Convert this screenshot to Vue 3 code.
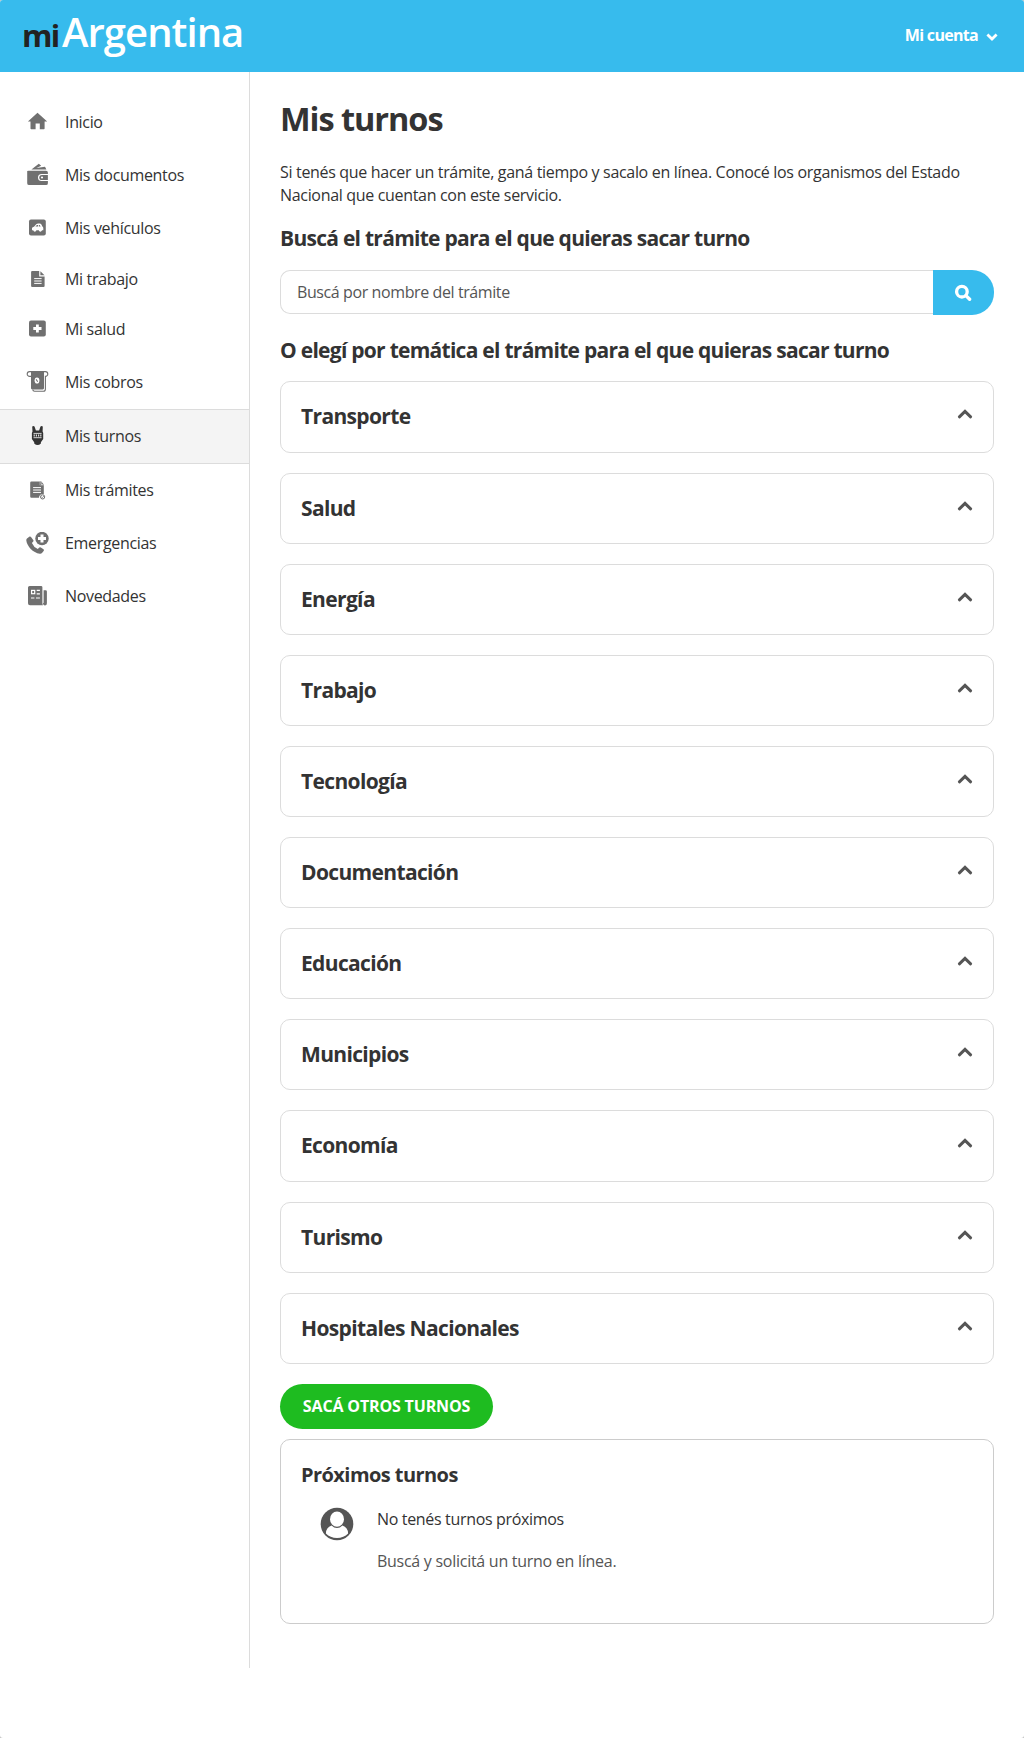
<script setup>
const menu = [
  { id: 'inicio', label: 'Inicio', h: 52 },
  { id: 'documentos', label: 'Mis documentos', h: 53, low: true },
  { id: 'vehiculos', label: 'Mis vehículos', h: 53, low: true },
  { id: 'trabajo', label: 'Mi trabajo', h: 50 },
  { id: 'salud', label: 'Mi salud', h: 51 },
  { id: 'cobros', label: 'Mis cobros', h: 54 },
  { id: 'turnos', label: 'Mis turnos', h: 55, active: true },
  { id: 'tramites', label: 'Mis trámites', h: 53 },
  { id: 'emergencias', label: 'Emergencias', h: 53 },
  { id: 'novedades', label: 'Novedades', h: 53 }
]

const topics = [
  'Transporte',
  'Salud',
  'Energía',
  'Trabajo',
  'Tecnología',
  'Documentación',
  'Educación',
  'Municipios',
  'Economía',
  'Turismo',
  'Hospitales Nacionales'
]
</script>

<template>
  <div class="page">
    <header class="topbar">
      <a class="logo"><span class="logo-mi">mi</span><span class="logo-ar">Argentina</span></a>
      <button class="account" type="button">
        <span>Mi cuenta</span>
        <svg width="12" height="8" viewBox="0 0 12 8"><path d="M1.4 1.6 6 6 10.6 1.6" fill="none" stroke="#fff" stroke-width="2.8" /></svg>
      </button>
    </header>

    <div class="body">
      <nav class="sidebar">
        <a
          v-for="item in menu"
          :key="item.id"
          class="item"
          :class="{ active: item.active, low: item.low }"
          :style="{ height: item.h + 'px' }"
        >
          <svg class="icon" viewBox="0 0 24 24" width="24" height="24" fill="currentColor">
            <template v-if="item.id === 'inicio'">
              <path d="M12.5 2.7 22.2 11.6H19.6V18.6Q19.6 19.3 18.9 19.3H14.8V13.4H10.6V19.3H6.2Q5.5 19.3 5.5 18.6V11.6H2.9Z" />
            </template>
            <template v-else-if="item.id === 'documentos'">
              <path d="M3.6 7.7H21Q22.9 7.7 22.9 9.5V10.9H16.6A3.5 3.5 0 0 0 16.6 18.1H22.9V20.2Q22.9 22.1 21 22.1H4.2Q2.2 22.1 2.2 20.2V8.1Q2.8 7.7 3.6 7.7Z" />
              <path d="M16.9 11.9H22.9V17.1H16.9A2.6 2.6 0 0 1 16.9 11.9Z" />
              <circle cx="17" cy="14.5" r="1.1" fill="#fff" />
              <path d="M6.4 6.5 13.8 .7 16.2 2.8 11.4 4.9 20 3.7 21.4 6.5Z" />
            </template>
            <template v-else-if="item.id === 'vehiculos'">
              <rect x="4" y="3.4" width="16.8" height="16" rx="2" />
              <path d="M7 14.2V12.2Q7.2 11 9 10.8L11.2 8.3Q12 7.5 13.3 7.5H14.6Q15.8 7.5 16.4 8.4L17.4 10.4Q18.3 10.9 18.3 12V14.2H16.9A1.6 1.6 0 0 1 13.8 14.2H11.4A1.6 1.6 0 0 1 8.3 14.2Z" fill="#fff" />
              <path d="M10.4 10.4 12 8.9H13V10.4ZM13.8 8.9H14.7L15.6 10.4H13.8Z" />
              <circle cx="9.8" cy="14.3" r="1.1" fill="#fff" />
              <circle cx="15.4" cy="14.3" r="1.1" fill="#fff" />
            </template>
            <template v-else-if="item.id === 'trabajo'">
              <path d="M7.2 4H14.2V9.4H19.6V18.9Q19.6 20 18.5 20H7.2Q6.1 20 6.1 18.9V5.1Q6.1 4 7.2 4Z" />
              <path d="M15.4 4.2 19.5 8.3H15.4Z" />
              <path d="M9.2 11.6H16.6M9.2 14H16.6M9.2 16.4H16.6" stroke="#fff" stroke-width="1" />
            </template>
            <template v-else-if="item.id === 'salud'">
              <rect x="4" y="2.4" width="16.8" height="16.2" rx="2" />
              <path d="M11 6.4H13.8V9.1H16.5V11.9H13.8V14.6H11V11.9H8.3V9.1H11Z" fill="#fff" />
            </template>
            <template v-else-if="item.id === 'cobros'">
              <path d="M6 2H19V18.3Q19 19.4 17.8 19.4H7.2Q6 19.4 6 18.3Z" />
              <path d="M6 6.4H4.6A2.1 2.1 0 0 1 4.6 1.6H20.4A2.1 2.1 0 0 1 20.4 6.4V19.2Q20.4 21.2 18.4 21.2H9.5Q8 21.2 7.7 19.6" fill="none" stroke="currentColor" stroke-width="1.1" />
              <ellipse cx="12" cy="10.5" rx="2.4" ry="3.1" fill="#fff" />
              <path d="M11.1 9.4 12.7 11.7" stroke="currentColor" stroke-width="1.1" />
            </template>
            <template v-else-if="item.id === 'turnos'">
              <path d="M7.2 1.5Q8.5 .7 9.5 1.5L10.9 5.6H14.1L15.5 1.5Q16.5 .7 17.8 1.5L17.6 6.4 18.2 8V13.9L15.9 17.2V18.5Q12.6 21.5 9.2 18.5V17.2L6.9 13.9V8L7.5 6.4Z" />
              <path d="M8.5 8.4H16.6M8.5 12.7H16.6" stroke="#fff" stroke-width=".8" />
              <path d="M8.6 10.5H16.6" stroke="#ddd" stroke-width="2" stroke-dasharray="1.2 1" />
            </template>
            <template v-else-if="item.id === 'tramites'">
              <path d="M6.4 2.6H14.7V6.3H18.8V15.2A3.6 3.6 0 0 0 14 18.8H6.4Q5.2 18.8 5.2 17.6V3.8Q5.2 2.6 6.4 2.6Z" />
              <path d="M14.7 2.6H16.3L18.8 5.4V6.3H14.7Z" />
              <path d="M16 3V5.6H18.6" fill="none" stroke="#fff" stroke-width=".6" />
              <path d="M8.1 8.6H16M8.1 11H16M8.1 13.4H16" stroke="#fff" stroke-width="1" />
              <circle cx="17.6" cy="17.9" r="2.1" fill="#fff" stroke="currentColor" stroke-width="1" />
              <path d="M16.5 17.9 17.4 18.7 18.8 17.1" fill="none" stroke="currentColor" stroke-width=".8" />
            </template>
            <template v-else-if="item.id === 'emergencias'">
              <path d="M2 6.6 4.6 4.6Q5.4 4.2 6 5L8.4 8.2Q8.8 9 8.2 9.6L6.9 10.9Q8.6 15 12.8 17L14.3 15.6Q15 15.1 15.8 15.6L18.5 17.3Q19.3 18 18.8 18.8L17 21.1Q16.2 22 14.8 21.8C8 20.6 2 14.2 1.3 8.4Q1.2 7.3 2 6.6Z" />
              <circle cx="17" cy="6.5" r="6.7" />
              <path d="M15.5 2.5H18.5V5H21V8H18.5V10.5H15.5V8H13V5H15.5Z" fill="#fff" />
            </template>
            <template v-else>
              <path d="M4.6 .9H16Q17.4 .9 17.4 2.3V18.3Q17.4 19.3 18 20.3H5Q3 20.3 3 18.3V2.5Q3 .9 4.6 .9Z" />
              <path d="M18.6 5.3H20.6Q21.9 5.3 21.9 6.6V18.2A2 2 0 0 1 17.9 18.6L18.6 17.8Z" />
              <rect x="6.6" y="5.4" width="3.1" height="3.3" fill="none" stroke="#fff" stroke-width="1.2" />
              <path d="M11.7 5.4H14.9M11.7 8.8H14.9M6 13H9.4M11 13H14.9" stroke="#fff" stroke-width="1.2" />
            </template>
          </svg>
          <span class="label">{{ item.label }}</span>
        </a>
      </nav>

      <main class="content">
        <h1>Mis turnos</h1>
        <p class="intro">Si tenés que hacer un trámite, ganá tiempo y sacalo en línea. Conocé los organismos del Estado<br />Nacional que cuentan con este servicio.</p>

        <h2 class="h-search">Buscá el trámite para el que quieras sacar turno</h2>
        <div class="search">
          <div class="field">Buscá por nombre del trámite</div>
          <button class="go" type="button" aria-label="Buscar">
            <svg width="18" height="18" viewBox="0 0 18 18" fill="none" stroke="#fff">
              <circle cx="7.9" cy="7.7" r="5.3" stroke-width="3.3" />
              <path d="M11.9 11.6 15.6 15.2" stroke-width="3.4" stroke-linecap="round" />
            </svg>
          </button>
        </div>

        <h2 class="h-topics">O elegí por temática el trámite para el que quieras sacar turno</h2>
        <div class="topics">
          <section v-for="topic in topics" :key="topic" class="topic">
            <h3>{{ topic }}</h3>
            <svg class="chev" width="16" height="12" viewBox="0 0 16 12"><path d="M2.4 8.8 8 3.4 13.6 8.8" fill="none" stroke="#555" stroke-width="3" stroke-linecap="round" /></svg>
          </section>
        </div>

        <button class="more" type="button">SACÁ OTROS TURNOS</button>

        <section class="upcoming">
          <h3>Próximos turnos</h3>
          <div class="row">
            <svg class="avatar" width="34" height="34" viewBox="0 0 34 34">
              <circle cx="17" cy="17" r="16.3" fill="#555" />
              <path d="M11.6 18.6Q6 20.4 5.9 26.6Q10.2 31 17 31Q23.8 31 28.1 26.6Q28 20.4 22.4 18.6Q20 21.1 17 21.1Q14 21.1 11.6 18.6Z" fill="#fff" />
              <ellipse cx="17" cy="12.2" rx="7" ry="7.6" fill="#fff" />
            </svg>
            <div class="msg">
              <p class="none">No tenés turnos próximos</p>
              <p class="hint">Buscá y solicitá un turno en línea.</p>
            </div>
          </div>
        </section>
      </main>
    </div>
  </div>
</template>

<style>
html,
body {
  margin: 0;
  background: #c4c4c4;
}
</style>

<style scoped>
.page {
  box-sizing: border-box;
  height: 1738px;
  overflow: hidden;
  border-radius: 3px;
  background: #fff;
  color: #333;
  font-family: "Open Sans", "Noto Sans", sans-serif;
  font-size: 16px;
  line-height: 23px;
}
h1, h2, h3, p { margin: 0; }
button {
  border: 0;
  padding: 0;
  font-family: inherit;
}
.topbar {
  display: flex;
  justify-content: space-between;
  height: 72px;
  background: #37bbed;
}
.logo {
  display: flex;
  align-items: baseline;
  padding: 5px 0 0 22px;
  line-height: 54px;
}
.logo-mi {
  width: 40px;
  color: #222;
  font-size: 31px;
  font-weight: 700;
  letter-spacing: -1.8px;
}
.logo-ar {
  color: #fff;
  font-size: 40px;
  font-weight: 600;
  letter-spacing: -0.95px;
}
.account {
  display: flex;
  align-items: center;
  gap: 8px;
  height: 70px;
  margin-right: 26px;
  background: none;
  color: #fff;
  font-size: 16px;
  font-weight: 700;
  letter-spacing: -0.7px;
}
.account svg { margin-top: 3px; }
.body { display: flex; }
.sidebar {
  box-sizing: border-box;
  flex: none;
  width: 250px;
  height: 1596px;
  padding-top: 24px;
  border-right: 1px solid #dcdcdc;
}
.item {
  box-sizing: border-box;
  display: flex;
  align-items: center;
  gap: 16px;
  padding-left: 25px;
  color: #333;
}
.icon { flex: none; color: #707070; }
.item.active {
  border-top: 1px solid #dcdcdc;
  border-bottom: 1px solid #dcdcdc;
  background: #f4f4f4;
}
.item.active .icon { color: #333; }
.label { letter-spacing: -0.33px; }
.low .label { padding-top: 1px; }
.content {
  flex: 1;
  padding: 24px 30px 0;
}
h1 {
  font-size: 32.5px;
  font-weight: 700;
  line-height: 46px;
  letter-spacing: -1.05px;
}
.intro {
  margin-top: 19px;
  letter-spacing: -0.32px;
}
h2 {
  font-size: 21px;
  font-weight: 700;
  line-height: 30px;
  letter-spacing: -0.73px;
}
.h-search { margin-top: 16px; }
.search {
  display: flex;
  align-items: flex-start;
  margin-top: 17px;
}
.field {
  box-sizing: border-box;
  flex: 1;
  height: 44px;
  padding: 10px 16px;
  border: 1px solid #dcdcdc;
  border-right: 0;
  border-radius: 10px 0 0 10px;
  color: #555;
  line-height: 22px;
  letter-spacing: -0.4px;
}
.go {
  box-sizing: border-box;
  display: flex;
  align-items: center;
  justify-content: center;
  width: 61px;
  height: 45px;
  padding-right: 1px;
  border-radius: 0 22px 22px 0;
  background: #37bbed;
}
.h-topics { margin-top: 20px; }
.topics {
  display: flex;
  flex-direction: column;
  gap: 20px;
  margin-top: 16.45px;
}
.topic {
  box-sizing: border-box;
  display: flex;
  align-items: center;
  justify-content: space-between;
  height: 71.14px;
  padding: 0 20px;
  border: 1px solid #dcdcdc;
  border-radius: 10px;
}
.topic h3 {
  margin-top: -1.2px;
  font-size: 21px;
  font-weight: 700;
  line-height: 30px;
  letter-spacing: -0.65px;
}
.chev { margin-top: -5.2px; }
.topic:first-child h3 { margin-top: -2px; }
.topic:first-child .chev { margin-top: -6px; }
.more {
  display: block;
  width: 213px;
  height: 45px;
  margin-top: 20px;
  border-radius: 23px;
  background: #1ebc20;
  color: #fff;
  font-size: 16px;
  font-weight: 700;
  line-height: 45px;
  letter-spacing: -0.16px;
}
.upcoming {
  box-sizing: border-box;
  height: 185px;
  margin-top: 10px;
  padding: 20px 20px 0;
  border: 1px solid #ccc;
  border-radius: 10px;
}
.upcoming h3 {
  font-size: 20px;
  font-weight: 700;
  line-height: 30px;
  letter-spacing: -0.56px;
}
.row {
  display: flex;
  gap: 23.5px;
  margin-top: 18px;
  padding-left: 18.5px;
}
.avatar { margin-top: -1px; }
.none { letter-spacing: -0.33px; }
.hint {
  margin-top: 19px;
  color: #555;
  letter-spacing: -0.27px;
}
</style>
